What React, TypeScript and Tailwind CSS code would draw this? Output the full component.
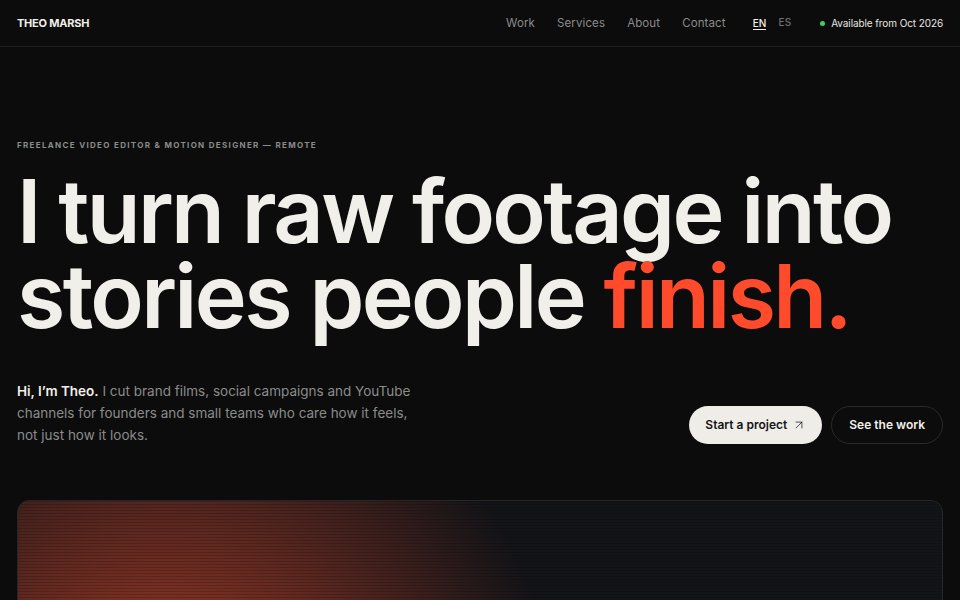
import { ArrowUpRight } from 'lucide-react';

const links = ['Work', 'Services', 'About', 'Contact'];

export default function App() {
  return (
    <div className="min-h-screen bg-[#0c0c0c] text-[#f1efea] font-['Inter',sans-serif] overflow-hidden">
      {/* Nav */}
      <header className="h-[47px] border-b border-[#1e1e1e] px-[17px] flex items-center">
        <div className="text-[11px] font-bold tracking-[-0.02em] text-[#f1efea]">THEO MARSH</div>
        <nav className="ml-auto flex items-center text-[11.5px] tracking-[0.01em] text-[#8b8b8b] pt-[1px]">
          {links.map((l) => (
            <a key={l} className="mr-[22px]">{l}</a>
          ))}
          <div className="ml-[5px] flex items-center gap-[12px] text-[10px] font-medium">
            <span className="text-[#f1efea] border-b border-[#f1efea] leading-[12px]">EN</span>
            <span className="text-[#6f6f6f] -mt-[2px]">ES</span>
          </div>
          <div className="ml-[29px] flex items-center gap-[6px] text-[10px] tracking-[-0.01em] text-[#e8e6e1]">
            <span className="w-[5px] h-[5px] rounded-full bg-[#34d36b]" />
            Available from Oct 2026
          </div>
        </nav>
      </header>

      <main className="px-[17px]">
        <p className="mt-[92px] text-[8px] font-bold tracking-[0.165em] text-[#8b8b8b] uppercase">
          Freelance video editor &amp; motion designer — remote
        </p>
        <h1 className="mt-[18px] text-[88px] leading-[85px] font-semibold tracking-[-0.03em]">
          I turn raw footage into
          <br />
          stories people <span className="text-[#ff4a2c]">finish.</span>
        </h1>

        <div className="mt-[41px] flex items-center justify-between">
          <p className="w-[410px] text-[13.5px] leading-[22px] text-[#8b8b8b]">
            <span className="text-[#f1efea] font-semibold">Hi, I’m Theo.</span> I cut brand films, social
            campaigns and YouTube channels for founders and small teams who care how it feels, not
            just how it looks.
          </p>
          <div className="flex items-center gap-[9px] mt-[23px]">
            <button className="h-[38px] px-[16px] rounded-full bg-[#efede8] text-[#141414] text-[12px] font-semibold flex items-center gap-[5px]">
              Start a project
              <ArrowUpRight className="w-[14px] h-[14px]" strokeWidth={1.25} />
            </button>
            <button className="h-[38px] px-[17px] rounded-full border border-[#2a2a2a] text-[#f1efea] text-[12px] font-semibold">
              See the work
            </button>
          </div>
        </div>

        <div className="mt-[54px] h-[200px] rounded-[12px] border border-[#262628] bg-[#131418] relative overflow-hidden">
          <div className="absolute inset-0 bg-[radial-gradient(ellipse_42%_190%_at_16%_108%,#a93b27_0%,#6e2c21_38%,rgba(19,20,24,0)_100%)]" />
          <div className="absolute inset-0 bg-[repeating-linear-gradient(to_bottom,rgba(0,0,0,0.18)_0px,rgba(0,0,0,0.18)_1px,transparent_1px,transparent_3px)]" />
        </div>
      </main>
    </div>
  );
}
